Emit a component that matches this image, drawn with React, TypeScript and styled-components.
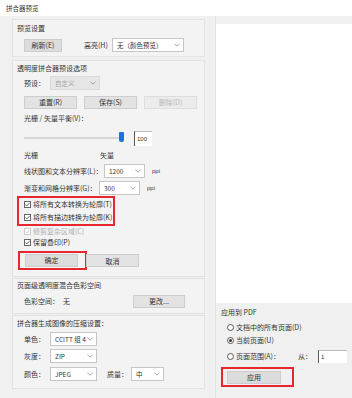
import styled, { createGlobalStyle } from 'styled-components'

const GlobalStyle = createGlobalStyle`
  html, body {
    margin: 0;
    padding: 0;
    background: #f0f0f0;
  }
  body {
    font-family: "Noto Sans CJK SC", "Noto Sans", sans-serif;
    font-size: 7px;
    color: #333;
  }
`

function Chevron() {
    return (
        <svg width="6" height="4" viewBox="0 0 6 4">
            <path d="M0.5 0.8 L3 3.2 L5.5 0.8" fill="none" stroke="#8a8a8a" strokeWidth="0.8" />
        </svg>
    )
}

function Check() {
    return (
        <svg width="7" height="7" viewBox="0 0 7 7">
            <path d="M1.4 3.6 L2.9 5 L5.6 1.8" fill="none" stroke="currentColor" strokeWidth="0.8" />
        </svg>
    )
}

type SelectProps = { value: string, width: number, disabled?: boolean }

function Select({ value, width, disabled }: SelectProps) {
    return (
        <SelectBox $width={width} $disabled={disabled}>
            <span>{value}</span>
            <Chevron />
        </SelectBox>
    )
}

function Checkbox({ label, disabled }: { label: string, disabled?: boolean }) {
    return (
        <Row $h={13}>
            <Box $disabled={disabled}><Check /></Box>
            <Text $disabled={disabled}>{label}</Text>
        </Row>
    )
}

function Radio({ label, checked }: { label: string, checked?: boolean }) {
    return (
        <>
            <Circle>{checked && <Dot />}</Circle>
            <Text>{label}</Text>
        </>
    )
}

export default function App() {
    return (
        <Window>
            <GlobalStyle />
            <TitleBar>拼合器预览</TitleBar>
            <Body>
                <LeftColumn>
                    <Group $pb={2}>
                        <Heading $h={16}>预览设置</Heading>
                        <Indent $h={18}>
                            <Button $width={38} $pressed>刷新(E)</Button>
                            <Label $width={28} $ml={22}>高亮(H)</Label>
                            <Select value="无（颜色预览）" width={72} />
                        </Indent>
                    </Group>

                    <Group $mt={3} $pb={6}>
                        <Heading $h={14}>透明度拼合器预设选项</Heading>
                        <Indent $h={16}>
                            <Label $width={26}>预设：</Label>
                            <Select value="自定义" width={50} disabled />
                        </Indent>
                        <Indent $h={22} $gap={7}>
                            <Button $width={53}>重置(R)</Button>
                            <Button $width={53}>保存(S)</Button>
                            <Button $width={53} $disabled>删除(D)</Button>
                        </Indent>
                        <Indent $h={10}>
                            <Text>光栅 / 矢量平衡(V)：</Text>
                        </Indent>
                        <Indent $h={20} $mt={5}>
                            <Track>
                                <Thumb />
                            </Track>
                            <NumberInput>100</NumberInput>
                        </Indent>
                        <Indent $h={14}>
                            <Label $width={76}>光栅</Label>
                            <Text>矢量</Text>
                        </Indent>
                        <Indent $h={18}>
                            <Label $width={80}>线状图和文本分辨率(L)：</Label>
                            <Select value="1200" width={41} />
                            <Unit>ppi</Unit>
                        </Indent>
                        <Indent $h={16}>
                            <Label $width={75}>渐变和网格分辨率(G)：</Label>
                            <Select value="300" width={41} />
                            <Unit>ppi</Unit>
                        </Indent>
                        <RedBox $width={98} $pl={5}>
                            <Checkbox label="将所有文本转换为轮廓(T)" />
                            <Checkbox label="将所有描边转换为轮廓(K)" />
                        </RedBox>
                        <Indent $h={10}>
                            <Box $disabled><Check /></Box>
                            <Text $disabled>修剪复杂区域(C)</Text>
                        </Indent>
                        <Indent $h={12}>
                            <Box><Check /></Box>
                            <Text>保留叠印(P)</Text>
                        </Indent>
                        <ButtonRow>
                            <RedBox $width={69} $pl={5}>
                                <Row $h={15}>
                                    <Button $width={53} $pressed>确定</Button>
                                </Row>
                            </RedBox>
                            <Button $width={53} $ml={-1}>取消</Button>
                        </ButtonRow>
                    </Group>

                    <Group $mt={1} $pb={2}>
                        <Heading $h={12}>页面级透明度混合色彩空间</Heading>
                        <Indent $h={20}>
                            <Label $width={39}>色彩空间：</Label>
                            <Label $width={70}>无</Label>
                            <Button $width={52}>更改...</Button>
                        </Indent>
                    </Group>

                    <Group $mt={1} $pb={4}>
                        <Heading $h={14}>拼合器生成图像的压缩设置：</Heading>
                        <Indent $h={18}>
                            <Label $width={26}>单色：</Label>
                            <Select value="CCITT 组 4" width={47} />
                        </Indent>
                        <Indent $h={16}>
                            <Label $width={26}>灰度：</Label>
                            <Select value="ZIP" width={47} />
                        </Indent>
                        <Indent $h={20}>
                            <Label $width={26}>颜色：</Label>
                            <Select value="JPEG" width={47} />
                            <Label $width={24} $ml={10}>质量：</Label>
                            <Select value="中" width={33} />
                        </Indent>
                    </Group>
                </LeftColumn>

                <RightColumn>
                    <Preview />
                    <ApplyPanel>
                        <Row $h={18}>
                            <Text>应用到 PDF</Text>
                        </Row>
                        <RadioRow $h={13}>
                            <Radio label="文档中的所有页面(D)" />
                        </RadioRow>
                        <RadioRow $h={13}>
                            <Radio label="当前页面(U)" checked />
                        </RadioRow>
                        <RadioRow $h={18}>
                            <Radio label="页面范围(A)：" />
                            <Label $width={20} $ml={18}>从：</Label>
                            <PageInput>1</PageInput>
                        </RadioRow>
                        <RedBox $width={73} $pl={4} $mt={2}>
                            <Row $h={16}>
                                <Button $width={54} $pressed>应用</Button>
                            </Row>
                        </RedBox>
                    </ApplyPanel>
                </RightColumn>
            </Body>
        </Window>
    )
}

const Window = styled.div`
  width: 352px;
  height: 398px;
  overflow: hidden;
  background: #f0f0f0;
`

const TitleBar = styled.div`
  height: 16px;
  background: #ffffff;
  display: flex;
  align-items: center;
  padding-left: 6px;
  font-size: 6.5px;
  color: #333;
`

const Body = styled.div`
  display: flex;
  height: 382px;
`

const LeftColumn = styled.div`
  width: 215px;
  padding: 3px 10px 0 12px;
  box-sizing: border-box;
  display: flex;
  flex-direction: column;
`

const Group = styled.section<{ $mt?: number, $pb?: number }>`
  margin-top: ${p => p.$mt ?? 0}px;
  padding: 0 4px ${p => p.$pb ?? 0}px 4px;
  border: 1px solid #e2e2e2;
  background: #f3f3f3;
  display: flex;
  flex-direction: column;
`

const Row = styled.div<{ $h: number, $mt?: number, $gap?: number }>`
  height: ${p => p.$h}px;
  margin-top: ${p => p.$mt ?? 0}px;
  display: flex;
  align-items: center;
  gap: ${p => p.$gap ?? 0}px;
  line-height: 1;
  white-space: nowrap;
`

const Heading = styled(Row)`
  color: #333;
`

const Indent = styled(Row)`
  padding-left: 7px;
`

const Text = styled.span<{ $disabled?: boolean }>`
  color: ${p => (p.$disabled ? '#b0b0b0' : '#333')};
`

const Label = styled.span<{ $width: number, $ml?: number }>`
  width: ${p => p.$width}px;
  margin-left: ${p => p.$ml ?? 0}px;
  flex-shrink: 0;
  white-space: nowrap;
`

const Unit = styled.span`
  margin-left: 7px;
  font-family: "Liberation Sans", sans-serif;
  font-size: 6px;
`

const Button = styled.div<{ $width: number, $pressed?: boolean, $disabled?: boolean, $ml?: number }>`
  width: ${p => p.$width}px;
  height: 13px;
  margin-left: ${p => p.$ml ?? 0}px;
  box-sizing: border-box;
  display: flex;
  align-items: center;
  justify-content: center;
  background: ${p => (p.$disabled ? '#ececec' : p.$pressed ? '#dcdcdc' : '#e3e3e3')};
  border: 1px solid ${p => (p.$disabled ? '#dedede' : '#cdcdcd')};
  color: ${p => (p.$disabled ? '#b8b8b8' : '#333')};
  flex-shrink: 0;
`

const SelectBox = styled.div<{ $width: number, $disabled?: boolean }>`
  width: ${p => p.$width}px;
  height: 14px;
  box-sizing: border-box;
  display: flex;
  align-items: center;
  justify-content: space-between;
  padding: 0 3px 0 4px;
  background: ${p => (p.$disabled ? '#e6e6e6' : '#ffffff')};
  border: 1px solid ${p => (p.$disabled ? '#dadada' : '#c6c6c6')};
  color: ${p => (p.$disabled ? '#a8a8a8' : '#333')};
  font-size: 6.5px;
  flex-shrink: 0;
`

const Track = styled.div`
  position: relative;
  width: 98px;
  height: 2px;
  background: #d6d6d6;
  margin-right: 12px;
`

const Thumb = styled.div`
  position: absolute;
  right: -2px;
  top: -5px;
  width: 5px;
  height: 10px;
  border-radius: 1px 1px 2px 2px;
  background: #1f6fd6;
`

const NumberInput = styled.div`
  width: 18px;
  height: 15px;
  box-sizing: border-box;
  background: #ffffff;
  border-left: 1px solid #555;
  border-top: 1px solid #bbb;
  display: flex;
  align-items: center;
  padding-left: 2px;
  font-family: "Liberation Sans", sans-serif;
  font-size: 6px;
`

const Box = styled.span<{ $disabled?: boolean }>`
  width: 7px;
  height: 7px;
  box-sizing: border-box;
  border: 1px solid ${p => (p.$disabled ? '#cccccc' : '#666')};
  color: ${p => (p.$disabled ? '#bbbbbb' : '#444')};
  background: #fff;
  margin-right: 2px;
  display: flex;
  align-items: center;
  justify-content: center;
  svg {
    flex-shrink: 0;
  }
`

const RedBox = styled.div<{ $width: number, $pl: number, $mt?: number }>`
  width: ${p => p.$width}px;
  margin-top: ${p => p.$mt ?? 0}px;
  padding-left: ${p => p.$pl}px;
  box-sizing: border-box;
  border: 2px solid #e8262e;
  display: flex;
  flex-direction: column;
`

const ButtonRow = styled.div`
  display: flex;
  align-items: center;
  margin-top: 3px;
  padding-left: 1px;
`

const RightColumn = styled.div`
  flex: 1;
  display: flex;
  flex-direction: column;
  border-left: 1px solid #e4e4e4;
  padding-top: 8px;
`

const Preview = styled.div`
  height: 279px;
  background: #ffffff;
`

const ApplyPanel = styled.div`
  padding-left: 5px;
  display: flex;
  flex-direction: column;
`

const RadioRow = styled(Row)`
  padding-left: 6px;
`

const Circle = styled.span`
  width: 7px;
  height: 7px;
  box-sizing: border-box;
  border-radius: 50%;
  border: 1px solid #555;
  background: #fff;
  margin-right: 2px;
  display: flex;
  align-items: center;
  justify-content: center;
`

const Dot = styled.span`
  width: 3px;
  height: 3px;
  border-radius: 50%;
  background: #333;
`

const PageInput = styled.div`
  width: 29px;
  height: 13px;
  box-sizing: border-box;
  background: #fff;
  border-left: 1px solid #555;
  border-top: 1px solid #bbb;
  padding-left: 2px;
  display: flex;
  align-items: center;
  font-family: "Liberation Sans", sans-serif;
  font-size: 6px;
`
